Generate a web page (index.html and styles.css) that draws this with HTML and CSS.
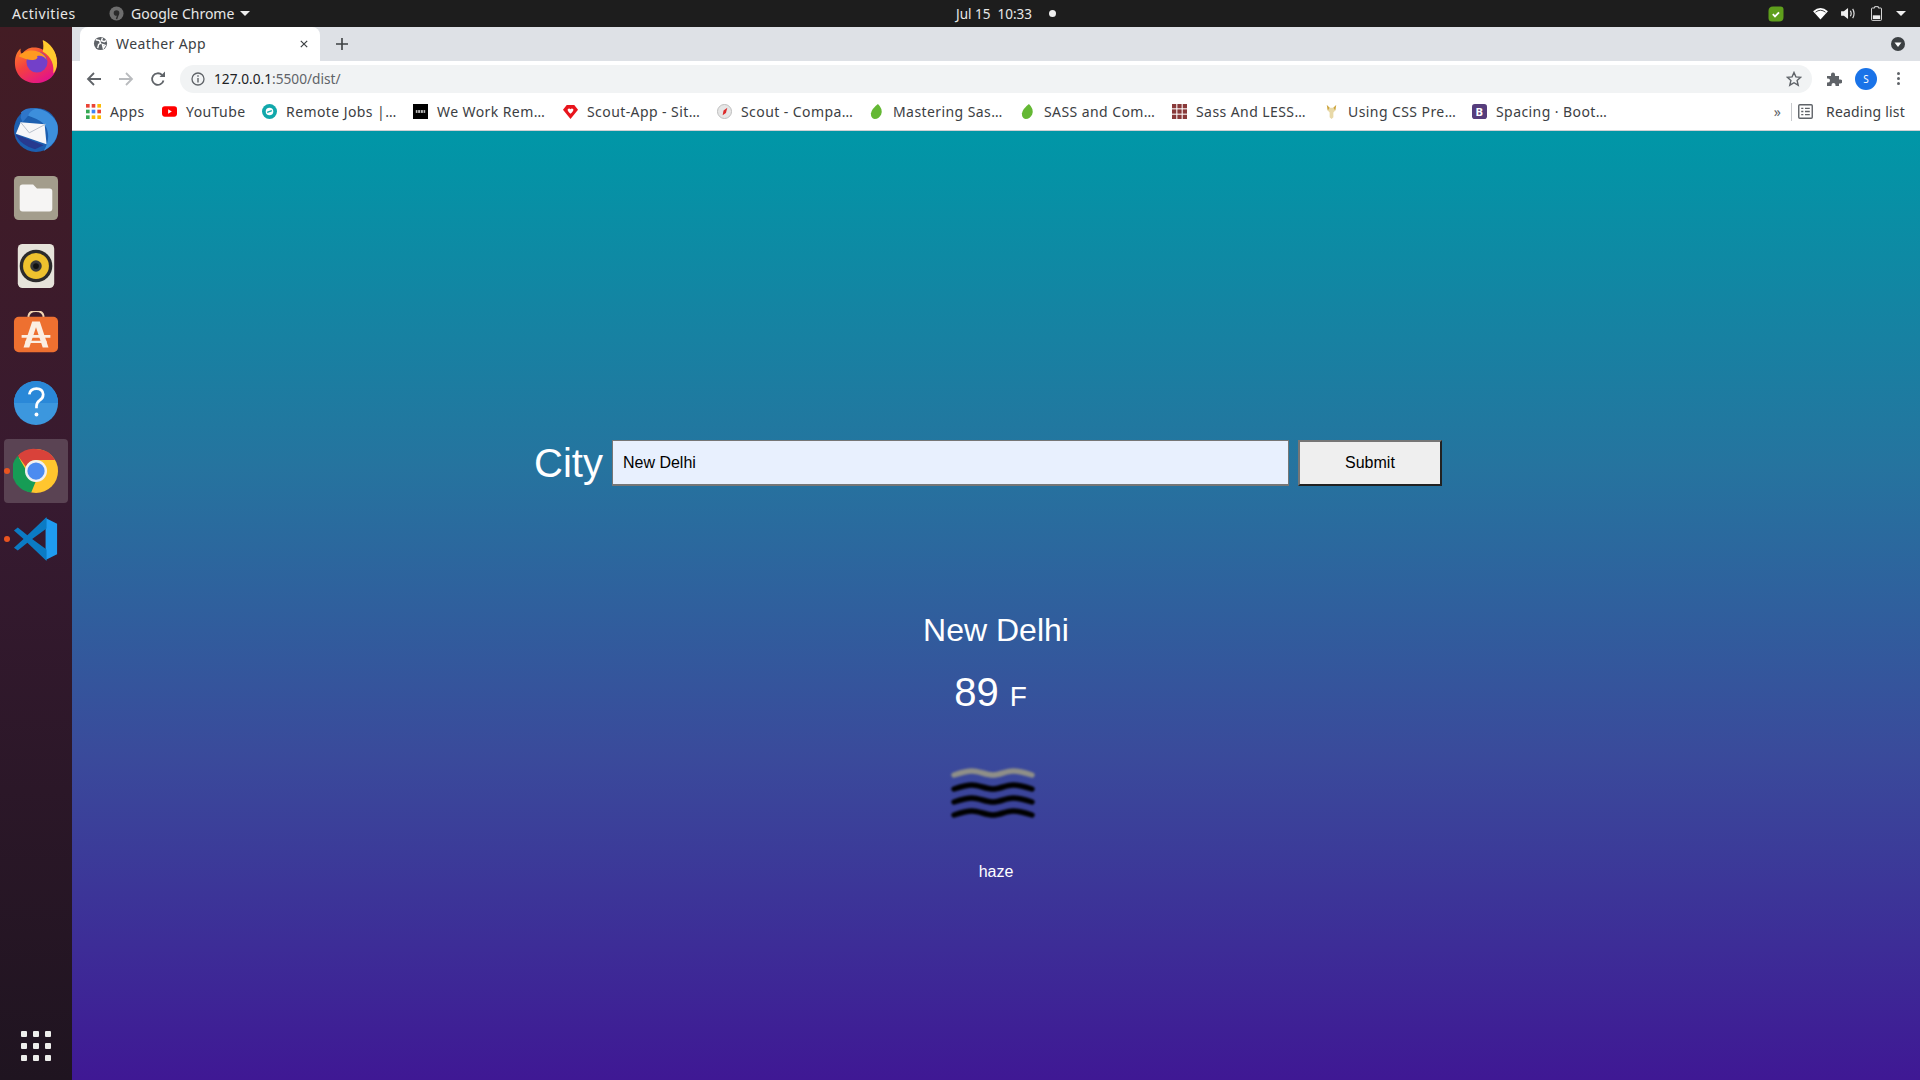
FILE: index.html
```html
<!DOCTYPE html>
<html lang="en">
<head>
    <meta charset="UTF-8">
    <meta name="viewport" content="width=device-width, initial-scale=1.0">
    <title>Weather App</title>
    <link rel="stylesheet" href="styles.css">
</head>
<body>
    <!-- gnome top bar -->
    <header class="topbar">
        <div class="topbar-left">
            <span class="activities">Activities</span>
            <span class="app-menu">
                <svg class="app-icon" viewBox="0 0 16 16"><circle cx="8" cy="8" r="7.5" fill="#6e6e6e"/><circle cx="8" cy="7.5" r="3" fill="#2a2a2a"/><path d="M10 8l-2 6" stroke="#2a2a2a" stroke-width="1.6"/></svg>
                Google Chrome
                <i class="caret"></i>
            </span>
        </div>
        <div class="clock">Jul 15&nbsp; 10:33 <i class="clock-dot"></i></div>
        <div class="status">
            <svg class="st-green" viewBox="0 0 16 16"><path d="M5 .5h7.500q3 0 3 3V11q0 4.500-4.500 4.500H4q-3.500 0-3.500-3.500V5Q.5.500 5 .5z" fill="#5f9f1c"/><path d="M4.800 8.200l2.200 2.200 4-4" fill="none" stroke="#fff" stroke-width="1.800"/></svg>
            <svg class="st-wifi" viewBox="0 0 16 14"><path d="M0 4.500Q8-2.500 16 4.500L8 13.500z" fill="#fff"/><path d="M2.600 5.600Q8 1.400 13.400 5.600" fill="none" stroke="#1d1d1d" stroke-width=".9"/></svg>
            <svg class="st-sound" viewBox="0 0 16 14"><path d="M0 4.500h3L7.500 1v12L3 9.500H0z" fill="#eee"/><path d="M10 4q1.800 3 0 6M12.500 2q3 5 0 10" fill="none" stroke="#ddd" stroke-width="1.300"/></svg>
            <svg class="st-battery" viewBox="0 0 12 16"><path d="M4 .5h4V2h2.500q1 0 1 1v11.500q0 1-1 1h-9q-1 0-1-1V3q0-1 1-1H4z" fill="none" stroke="#eee"/><rect x="2" y="10" width="8" height="4" fill="#eee"/></svg>
            <i class="caret"></i>
        </div>
    </header>

    <div class="desktop">
        <!-- ubuntu dock -->
        <nav class="dock">
            <div class="dock-item">
                <svg class="dock-icon" viewBox="0 0 48 48">
                    <defs><linearGradient id="ffx" x1="0" y1="0" x2=".6" y2="1"><stop offset="0" stop-color="#ff9a1f"/><stop offset=".55" stop-color="#f5413f"/><stop offset="1" stop-color="#e31587"/></linearGradient></defs>
                    <path d="M24 47C11 47 2 38 2 26 2 20 4 14 8 11c-.5 3 0 5 1.500 6C12 12 18 9 24 10c4 .7 7 2 8 3 .5-3 0-7-1-10 7 3 15 11 15 23 0 12-9 21-22 21z" fill="url(#ffx)"/>
                    <path d="M31 2c7 3 15 11 15 24 0 5-2 9-4 11 1-8-1-17-11-23 1-4 1-8 0-12z" fill="#ffcb2e"/>
                    <circle cx="25" cy="25" r="11" fill="#7340c9"/>
                    <path d="M6 19c5-6 14-7 20-5 4 1 9 5 9 9-2-4-7-5-10-4 2 2-2 4-5 4-4 0-9-2-14-4z" fill="#ff9a1f"/>
                </svg>
            </div>
            <div class="dock-item">
                <svg class="dock-icon" viewBox="0 0 48 48">
                    <circle cx="24" cy="25" r="23" fill="#1c5fb0"/>
                    <path d="M8 7C18-1 38 1 46 18c3 12-2 22-14 29 5-9 6-16 3-24C31 14 20 12 8 7z" fill="#3d8fdc"/>
                    <path d="M9 6q6-5 14-3-6 2-7 7l-6 7-2-5z" fill="#2f76c9"/>
                    <path d="M8 17l25 2 2 21-32-11z" fill="#f6f6f8"/>
                    <path d="M8 17l9 11 17-9" fill="none" stroke="#b6bdc9" stroke-width="1"/>
                    <path d="M3 31q7 11 20 14l9-4-28-11z" fill="#273a8f"/>
                </svg>
            </div>
            <div class="dock-item">
                <svg class="dock-icon" viewBox="0 0 48 48">
                    <rect x="1" y="1" width="46" height="46" rx="5" fill="#a39d8c"/>
                    <path d="M7 13q0-3 3-3h11l4 4h13q3 0 3 3v18q0 3-3 3H10q-3 0-3-3z" fill="#f6f5f4"/>
                </svg>
            </div>
            <div class="dock-item">
                <svg class="dock-icon" viewBox="0 0 48 48">
                    <rect x="5" y="1" width="38" height="46" rx="5" fill="#e6e3da"/>
                    <circle cx="24" cy="24" r="17" fill="#2b2b2b"/>
                    <circle cx="24" cy="24" r="13.500" fill="#eec22e"/>
                    <circle cx="24" cy="24" r="6" fill="#3a3a3a"/>
                    <circle cx="24" cy="24" r="3" fill="#111"/>
                </svg>
            </div>
            <div class="dock-item">
                <svg class="dock-icon" viewBox="0 0 48 48">
                    <path d="M16 7q0-7 8-7t8 7" fill="none" stroke="#f2d5b2" stroke-width="2"/>
                    <rect x="1" y="6" width="46" height="37" rx="5" fill="#ee7030"/>
                    <path d="M20 11h8l9 27h-6l-7-21-7 21h-6z" fill="#fbeee2"/>
                    <path d="M9 25h30v3H9zM13 31h22v2.500H13z" fill="#fbeee2"/>
                </svg>
            </div>
            <div class="dock-item">
                <svg class="dock-icon" viewBox="0 0 48 48">
                    <circle cx="24" cy="24" r="23" fill="#3c97de"/>
                    <path d="M1 24a23 23 0 0 1 46 0z" fill="#2a88d8"/>
                    <path d="M17 15q1-6 7.500-6t7 6q0 4-4 6.500-3 2-3 6v2" fill="none" stroke="#fff" stroke-width="2.800"/>
                    <circle cx="24.500" cy="36" r="2" fill="#fff"/>
                </svg>
            </div>
            <div class="dock-item is-active is-running">
                <svg class="dock-icon" viewBox="0 0 48 48">
                    <circle cx="24" cy="24" r="23" fill="#ffc62e"/>
                    <path d="M24 1a23 23 0 0 1 20 11.500H24a11.500 11.500 0 0 0-10.500 7L5 8A23 23 0 0 1 24 1z" fill="#d9423a"/>
                    <path d="M5 8l9.500 16.500a11.500 11.500 0 0 0 9 11L19 46.500A23 23 0 0 1 5 8z" fill="#169c55"/>
                    <circle cx="24" cy="24" r="11.500" fill="#f1f1f1"/>
                    <circle cx="24" cy="24" r="9" fill="#4c8bf0"/>
                </svg>
            </div>
            <div class="dock-item is-running">
                <svg class="dock-icon" viewBox="0 0 48 48">
                    <path d="M34 2l12 6v32l-12 6z" fill="#1f9cf0"/>
                    <path d="M35 1L15 20 5 12 1 15l10 9-10 9 4 3 10-8 20 19V35L20 24 35 13z" fill="#0b7bc4"/>
                </svg>
            </div>
            <div class="dock-item show-apps">
                <div class="apps-grid"><i></i><i></i><i></i><i></i><i></i><i></i><i></i><i></i><i></i></div>
            </div>
        </nav>

        <div class="browser">
            <div class="tabstrip">
                <div class="tab">
                    <svg class="tab-globe" viewBox="0 0 16 16"><circle cx="8" cy="8" r="7" fill="#5f6368"/><path d="M3 4l4 1 1 3-2 1-1 4M10 2l-1 3 3 1 2-1M10 9l3 1-2 3z" fill="none" stroke="#fff" stroke-width="1.500"/></svg>
                    <span class="tab-title">Weather App</span>
                    <svg class="tab-close" viewBox="0 0 10 10"><path d="M1 1l8 8M9 1l-8 8" stroke="#3c4043" stroke-width="1.500"/></svg>
                </div>
                <svg class="new-tab" viewBox="0 0 12 12"><path d="M6 0v12M0 6h12" stroke="#3c4043" stroke-width="1.600"/></svg>
                <svg class="tab-search" viewBox="0 0 14 14"><circle cx="7" cy="7" r="7" fill="#3c4043"/><path d="M3.500 5.500h7L7 10z" fill="#fff"/></svg>
            </div>

            <div class="toolbar">
                <svg class="tb-btn" viewBox="0 0 16 16"><path d="M15 8H2M8 2L2 8l6 6" fill="none" stroke="#5f6368" stroke-width="1.800"/></svg>
                <svg class="tb-btn" viewBox="0 0 16 16"><path d="M1 8h13M8 2l6 6-6 6" fill="none" stroke="#b9bbbe" stroke-width="1.800"/></svg>
                <svg class="tb-btn" viewBox="0 0 16 16"><path d="M13.500 9.500A5.800 5.800 0 1 1 12 4" fill="none" stroke="#5f6368" stroke-width="1.800"/><path d="M9.500 6H15V.500z" fill="#5f6368"/></svg>
                <div class="omnibox">
                    <svg class="info" viewBox="0 0 14 14"><circle cx="7" cy="7" r="6" fill="none" stroke="#5f6368" stroke-width="1.300"/><path d="M7 6v4.500M7 3.200v1.500" stroke="#5f6368" stroke-width="1.400"/></svg>
                    <span class="url"><b>127.0.0.1</b>:5500/dist/</span>
                    <svg class="star" viewBox="0 0 16 16"><path d="M8 1.500l1.900 4.400 4.800.4-3.600 3.200 1.100 4.700L8 11.700l-4.200 2.500 1.100-4.700L1.300 6.300l4.800-.4z" fill="none" stroke="#5f6368" stroke-width="1.400"/></svg>
                </div>
                <svg class="puzzle" viewBox="0 0 16 16"><path d="M1 5h4V3.500a2 2 0 0 1 4 0V5h4v3.500h1.300a2 2 0 0 1 0 4H13V15H9.500v-1a2 2 0 0 0-4 0v1H1v-3.500h1a2 2 0 0 0 0-4H1z" fill="#5f6368"/></svg>
                <span class="avatar">S</span>
                <span class="kebab"><i></i><i></i><i></i></span>
            </div>

            <div class="bookmarks">
                <a class="bm">
                    <svg class="bm-icon" viewBox="0 0 14 14"><g fill="#ea4335"><rect width="3.400" height="3.400"/><rect x="5.300" width="3.400" height="3.400"/></g><rect x="10.600" width="3.400" height="3.400" fill="#fbbc05"/><rect y="5.300" width="3.400" height="3.400" fill="#34a853"/><rect x="5.300" y="5.300" width="3.400" height="3.400" fill="#4285f4"/><rect x="10.600" y="5.300" width="3.400" height="3.400" fill="#ea4335"/><rect y="10.600" width="3.400" height="3.400" fill="#34a853"/><rect x="5.300" y="10.600" width="3.400" height="3.400" fill="#fbbc05"/><rect x="10.600" y="10.600" width="3.400" height="3.400" fill="#fbbc05"/></svg>
                    Apps
                </a>
                <a class="bm">
                    <svg class="bm-icon" viewBox="0 0 16 16"><rect y="2.500" width="16" height="11" rx="3" fill="#f00"/><path d="M6.500 5.500l4 2.500-4 2.500z" fill="#fff"/></svg>
                    YouTube
                </a>
                <a class="bm">
                    <svg class="bm-icon" viewBox="0 0 16 16"><circle cx="8" cy="8" r="8" fill="#11a8ab"/><circle cx="8" cy="8" r="4" fill="#fff"/><path d="M5.500 9l5-2" stroke="#11a8ab" stroke-width="1.300"/></svg>
                    Remote Jobs |…
                </a>
                <a class="bm">
                    <svg class="bm-icon" viewBox="0 0 16 16"><rect width="16" height="16" fill="#000"/><path d="M3 6.500h10v3H3z" fill="#bbb"/><path d="M5 6.500v3M8 6.500v3M11 6.500v3" stroke="#000" stroke-width=".8"/></svg>
                    We Work Rem…
                </a>
                <a class="bm">
                    <svg class="bm-icon" viewBox="0 0 16 16"><path d="M4 1h8l4 5-8 10L0 6z" fill="#e8141c"/><path d="M5 5.500q1.500-1.500 3 0 1.500-1.500 3 0 .5 2-3 5-3.500-3-3-5z" fill="#fff"/></svg>
                    Scout-App - Sit…
                </a>
                <a class="bm">
                    <svg class="bm-icon" viewBox="0 0 16 16"><circle cx="8" cy="8" r="7.500" fill="#e6e6e6" stroke="#bbb"/><path d="M11 4L9.500 9.500 6 12l1-5z" fill="#dc2a2a"/></svg>
                    Scout - Compa…
                </a>
                <a class="bm">
                    <svg class="bm-icon" viewBox="0 0 16 16"><path d="M9.500 0Q15 5 13 11q-2 5-7 5-4-1-4-6Q3 5 9.500 0z" fill="#64b834"/></svg>
                    Mastering Sas…
                </a>
                <a class="bm">
                    <svg class="bm-icon" viewBox="0 0 16 16"><path d="M9.500 0Q15 5 13 11q-2 5-7 5-4-1-4-6Q3 5 9.500 0z" fill="#64b834"/></svg>
                    SASS and Com…
                </a>
                <a class="bm">
                    <svg class="bm-icon" viewBox="0 0 14 14"><g fill="#8a3a3a"><rect width="4" height="4"/><rect x="5" width="4" height="4"/><rect x="10" width="4" height="4"/><rect y="5" width="4" height="4"/><rect x="5" y="5" width="4" height="4"/><rect x="10" y="5" width="4" height="4"/><rect y="10" width="4" height="4"/><rect x="5" y="10" width="4" height="4"/><rect x="10" y="10" width="4" height="4"/></g></svg>
                    Sass And LESS…
                </a>
                <a class="bm">
                    <svg class="bm-icon" viewBox="0 0 16 16"><path d="M3 1l3 3h4l3-3-1 6-2 2v5l-2 2-2-2V9L4 7z" fill="#e8d9a8"/><path d="M3 1l3 3-2 3zM13 1l-3 3 2 3z" fill="#cda53e"/></svg>
                    Using CSS Pre…
                </a>
                <a class="bm">
                    <svg class="bm-icon" viewBox="0 0 16 16"><rect width="16" height="16" rx="3" fill="#563d7c"/><text x="8" y="12.500" class="bs-letter">B</text></svg>
                    Spacing · Boot…
                </a>
                <span class="bm-more">»</span>
                <span class="bm-sep"></span>
                <a class="bm reading">
                    <svg class="bm-icon" viewBox="0 0 14 14"><rect x=".7" y=".7" width="12.600" height="12.600" rx="1" fill="none" stroke="#5f6368" stroke-width="1.300"/><path d="M3 4h2M3 7h2M3 10h2M6.500 4h4.500M6.500 7h4.500M6.500 10h4.500" stroke="#5f6368" stroke-width="1.200"/></svg>
                    Reading list
                </a>
            </div>

            <!-- the page itself -->
            <main class="page">
                <form class="city-form">
                    <label class="city-label" for="city">City</label>
                    <input class="city-input" id="city" type="text" value="New Delhi">
                    <button class="city-submit" type="button">Submit</button>
                </form>
                <h2 class="place">New Delhi</h2>
                <p class="temp">89 <span class="unit">F</span></p>
                <svg class="weather-icon" viewBox="0 0 100 100">
                    <defs><filter id="soft"><feGaussianBlur stdDeviation="1"/></filter></defs>
                    <g fill="none" stroke-width="5.500" stroke-linecap="round" filter="url(#soft)">
                        <path d="M8 31C14 29 20 27 26 27C33 27 40 31 47 31C54 31 60 27 67 27C74 27 80 29 86 31" stroke="#8f8f88"/>
                        <path d="M8 45C14 43 20 41 26 41C33 41 40 45 47 45C54 45 60 41 67 41C74 41 80 43 86 45" stroke="#000"/>
                        <path d="M8 58C14 56 20 54 26 54C33 54 40 58 47 58C54 58 60 54 67 54C74 54 80 56 86 58" stroke="#000"/>
                        <path d="M8 71C14 69 20 67 26 67C33 67 40 71 47 71C54 71 60 67 67 67C74 67 80 69 86 71" stroke="#000"/>
                    </g>
                </svg>
                <p class="desc">haze</p>
            </main>
        </div>
    </div>
</body>
</html>
```

FILE: styles.css
```css
* {
    box-sizing: border-box;
}

html, body {
    height: 100%;
}

body {
    margin: 0;
    display: flex;
    flex-direction: column;
    overflow: hidden;
    font-family: "Noto Sans", "Open Sans", sans-serif;
}

/* top bar */
.topbar {
    height: 27px;
    flex: none;
    display: flex;
    align-items: center;
    background: #1d1d1d;
    color: #e8e8e8;
    font-size: 14px;
}

.topbar-left {
    width: 956px;
    display: flex;
    align-items: center;
    padding-left: 12px;
}

.activities {
    width: 97px;
    letter-spacing: .55px;
}

.app-menu {
    display: flex;
    align-items: center;
}

.app-icon {
    width: 15px;
    height: 15px;
    margin-right: 7px;
}

.caret {
    display: inline-block;
    border-left: 5px solid transparent;
    border-right: 5px solid transparent;
    border-top: 5px solid #eee;
}

.app-menu .caret {
    margin-left: 6px;
}

.clock {
    display: flex;
    align-items: center;
    font-size: 13.500px;
    white-space: pre;
}

.clock-dot {
    width: 7px;
    height: 7px;
    margin-left: 13px;
    border-radius: 50%;
    background: #eee;
}

.status {
    margin-left: auto;
    display: flex;
    align-items: center;
    padding-right: 14px;
}

.status svg {
    display: block;
}

.st-green {
    width: 16px;
    height: 16px;
    margin-right: 29px;
}

.st-wifi {
    width: 15px;
    height: 13px;
    margin-right: 13px;
}

.st-sound {
    width: 15px;
    height: 13px;
    margin-right: 15px;
}

.st-battery {
    width: 11px;
    height: 15px;
    margin-right: 14px;
}

/* desktop */
.desktop {
    flex: 1;
    display: flex;
    min-height: 0;
}

.dock {
    width: 72px;
    flex: none;
    display: flex;
    flex-direction: column;
    background: linear-gradient(#431c24, #371a30 45%, #1f1420);
}

.dock-item {
    height: 68.300px;
    flex: none;
    position: relative;
    display: flex;
    align-items: center;
    justify-content: center;
}

.dock-icon {
    width: 46px;
    height: 46px;
}

.is-active::before {
    content: "";
    position: absolute;
    left: 4px;
    top: 2px;
    right: 4px;
    bottom: 2px;
    border-radius: 4px;
    background: #5a4353;
}

.is-active .dock-icon {
    position: relative;
}

.is-running::after {
    content: "";
    position: absolute;
    left: 4px;
    top: 31px;
    width: 6px;
    height: 6px;
    border-radius: 50%;
    background: #e95420;
}

.show-apps {
    margin-top: auto;
}

.apps-grid {
    display: grid;
    grid-template-columns: repeat(3, 6px);
    gap: 6px;
}

.apps-grid i {
    height: 6px;
    border-radius: 1px;
    background: #eeeeec;
}

/* browser chrome */
.browser {
    flex: 1;
    display: flex;
    flex-direction: column;
    min-width: 0;
}

.tabstrip {
    height: 34px;
    flex: none;
    display: flex;
    align-items: center;
    padding-left: 8px;
    background: #dee1e6;
}

.tab {
    width: 240px;
    height: 34px;
    display: flex;
    align-items: center;
    padding: 0 12px;
    background: #fff;
    border-radius: 8px 8px 0 0;
}

.tab-globe {
    width: 15px;
    height: 15px;
    margin-left: 1px;
    margin-top: -1px;
}

.tab-title {
    flex: 1;
    margin-left: 8px;
    margin-top: -2px;
    font-size: 14px;
    letter-spacing: .4px;
    color: #3c4043;
}

.tab-close {
    width: 8px;
    height: 8px;
}

.new-tab {
    width: 12px;
    height: 12px;
    margin-left: 16px;
}

.tab-search {
    width: 14px;
    height: 14px;
    margin-left: auto;
    margin-right: 15px;
}

.toolbar {
    height: 35px;
    flex: none;
    display: flex;
    align-items: center;
    padding-left: 14px;
    background: #fff;
}

.tb-btn {
    width: 16px;
    height: 16px;
    margin-right: 16px;
}

.omnibox {
    width: 1632px;
    height: 28px;
    margin-left: -2px;
    display: flex;
    align-items: center;
    padding: 0 10px 0 11px;
    border-radius: 14px;
    background: #f1f3f4;
}

.info {
    width: 14px;
    height: 14px;
}

.url {
    flex: 1;
    margin-left: 9px;
    font-size: 13.700px;
    color: #5f6368;
}

.url b {
    font-weight: 400;
    color: #202124;
}

.star {
    width: 16px;
    height: 16px;
}

.puzzle {
    width: 16px;
    height: 16px;
    margin-left: 14px;
}

.avatar {
    width: 22px;
    height: 22px;
    margin-left: 13px;
    display: flex;
    align-items: center;
    justify-content: center;
    border-radius: 50%;
    background: #1a73e8;
    color: #fff;
    font-size: 10px;
}

.kebab {
    display: flex;
    flex-direction: column;
    gap: 2px;
    margin-left: 20px;
}

.kebab i {
    width: 3px;
    height: 3px;
    border-radius: 50%;
    background: #5f6368;
}

.bookmarks {
    height: 35px;
    flex: none;
    display: grid;
    grid-template-columns: 76px 100px 151px 150px 154px 152px 151px 152px 152px 148px 148px 171px 1px auto;
    align-items: center;
    padding: 0 0 3px 14px;
    background: #fff;
    border-bottom: 1px solid #cfd1d4;
}

.bm {
    display: flex;
    align-items: center;
    white-space: nowrap;
    font-size: 14px;
    letter-spacing: .42px;
    color: #3c4043;
}

.bm-icon {
    width: 15px;
    height: 15px;
    flex: none;
    margin-right: 9px;
}

.bs-letter {
    fill: #fff;
    font-size: 12px;
    font-weight: 700;
    text-anchor: middle;
}

.bm-more {
    justify-self: end;
    margin-right: 10px;
    font-size: 14px;
    color: #5f6368;
}

.bm-sep {
    height: 18px;
    background: #c8cacd;
}

.reading {
    margin-left: 6px;
    letter-spacing: .2px;
}

.reading .bm-icon {
    margin-right: 13px;
}

/* page */
.page {
    flex: 1;
    display: flex;
    flex-direction: column;
    align-items: center;
    padding-top: 309px;
    background: linear-gradient(#0097a7, #25749f 35%, #3a4a9b 66%, #3f1894);
    color: #fff;
    font-family: "Liberation Sans", Arial, sans-serif;
}

.city-form {
    display: flex;
    align-items: center;
    margin-right: 16px;
}

.city-label {
    margin-right: 9px;
    font-size: 40px;
}

.city-input {
    width: 677px;
    height: 46px;
    padding: 0 10px;
    border: 1px solid #767676;
    border-bottom-width: 2px;
    background: #e8f0fe;
    font-family: inherit;
    font-size: 16px;
    color: #000;
}

.city-submit {
    width: 144px;
    height: 46px;
    margin-left: 9px;
    border: 2px solid #767676;
    border-color: #767676 #222 #222 #767676;
    background: #efefef;
    font-family: inherit;
    font-size: 16px;
    color: #000;
}

.place {
    margin: 126px 0 0;
    font-size: 32px;
    font-weight: 400;
    line-height: 37px;
}

.temp {
    margin: 20px 11px 0 0;
    font-size: 40px;
    line-height: 46px;
}

.unit {
    font-size: 28px;
}

.weather-icon {
    width: 100px;
    height: 100px;
    margin-top: 24px;
}

.desc {
    margin: 19px 0 0;
    font-size: 16px;
}
```
